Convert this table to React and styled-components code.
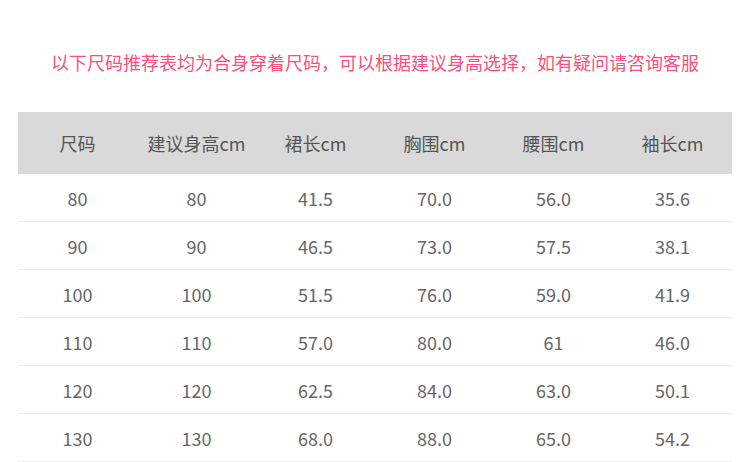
import React from "react";
import styled, { createGlobalStyle } from "styled-components";

const Global = createGlobalStyle`
  html, body { margin: 0; padding: 0; background: #fff; }
  body { font-family: "Noto Sans CJK SC", "Noto Sans", sans-serif; }
`;

const Page = styled.div`
  width: 750px;
  padding-top: 50px;
  display: flex;
  flex-direction: column;
  align-items: center;
`;

const Notice = styled.p`
  margin: 0;
  font-size: 18px;
  line-height: 24px;
  color: #fd4f7c;
  text-align: center;
`;

const Table = styled.div`
  margin-top: 38px;
  width: 714px;
  display: flex;
  flex-direction: column;
`;

const Row = styled.div`
  display: grid;
  grid-template-columns: repeat(6, 1fr);
  align-items: center;
  height: ${(p) => (p.$head ? "62px" : "47px")};
  background: ${(p) => (p.$head ? "#d9d9d9" : "#fff")};
  border-bottom: ${(p) => (p.$head ? "none" : "1px solid #eeeeee")};
`;

const Cell = styled.div`
  text-align: center;
  font-size: 18px;
  color: ${(p) => (p.$head ? "#555" : "#666")};
`;

const headers = ["尺码", "建议身高cm", "裙长cm", "胸围cm", "腰围cm", "袖长cm"];
const rows = [
  ["80", "80", "41.5", "70.0", "56.0", "35.6"],
  ["90", "90", "46.5", "73.0", "57.5", "38.1"],
  ["100", "100", "51.5", "76.0", "59.0", "41.9"],
  ["110", "110", "57.0", "80.0", "61", "46.0"],
  ["120", "120", "62.5", "84.0", "63.0", "50.1"],
  ["130", "130", "68.0", "88.0", "65.0", "54.2"],
];

export default function App() {
  return (
    <Page>
      <Global />
      <Notice>以下尺码推荐表均为合身穿着尺码，可以根据建议身高选择，如有疑问请咨询客服</Notice>
      <Table>
        <Row $head>
          {headers.map((h) => (
            <Cell $head key={h}>{h}</Cell>
          ))}
        </Row>
        {rows.map((r, i) => (
          <Row key={i}>
            {r.map((c, j) => (
              <Cell key={j}>{c}</Cell>
            ))}
          </Row>
        ))}
      </Table>
    </Page>
  );
}
